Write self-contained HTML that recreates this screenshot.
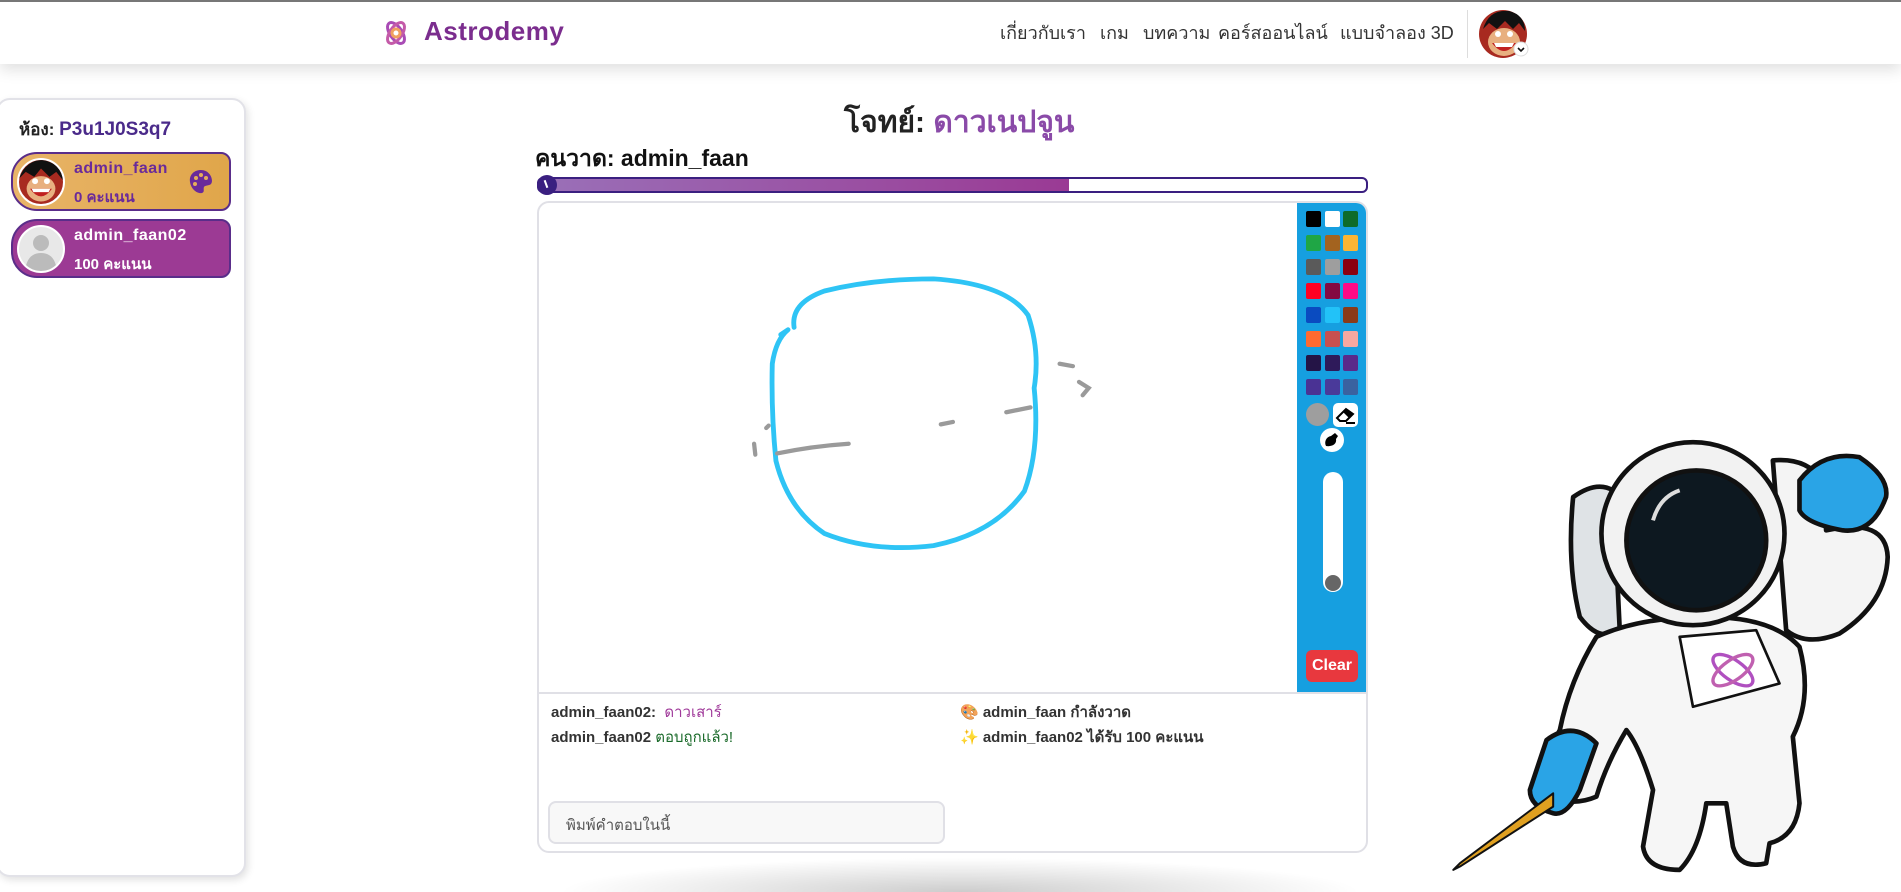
<!DOCTYPE html>
<html><head><meta charset="utf-8">
<style>
*{box-sizing:border-box;margin:0;padding:0}
html,body{width:1901px;height:892px;overflow:hidden}
body{background:#fff;font-family:"Liberation Sans","Noto Sans CJK SC",sans-serif;position:relative;color:#222}
.hdr{position:absolute;left:0;top:0;width:1901px;height:64px;background:#fff;border-top:2px solid #777;box-shadow:0 6px 14px rgba(0,0,0,.12);z-index:2}
.abs{position:absolute}
.nav{position:absolute;top:16px;font-size:18px;color:#333;white-space:nowrap}
.panel{position:absolute;left:-4px;top:98px;width:250px;height:779px;border:2px solid #e2e2e8;border-radius:14px;box-shadow:2px 3px 8px rgba(0,0,0,.12);background:#fff}
.card{position:absolute;left:13px;width:220px;height:59px;border:2px solid #5a2d8a;border-radius:26px 10px 10px 26px}
.av{position:absolute;left:4px;top:4px;width:48px;height:48px;border-radius:50%;border:2px solid #fff;overflow:hidden}
.nm{position:absolute;left:61px;top:6px;font-weight:bold;font-size:16px;letter-spacing:.5px}
.sc{position:absolute;left:61px;top:31px;font-weight:bold;font-size:15px}
.sw{position:absolute;width:15px;height:16px;border-radius:2px}
</style></head><body>
<div class="hdr">
 <svg class="abs" style="left:382px;top:16px" width="28" height="30" viewBox="0 0 28 30">
  <g fill="none" stroke-width="3"><ellipse cx="14" cy="15" rx="12" ry="6" stroke="#a94bb5" transform="rotate(55 14 15)"/><ellipse cx="14" cy="15" rx="12" ry="6" stroke="#c45aa8" transform="rotate(-55 14 15)"/><circle cx="14" cy="15" r="4" stroke="#f0a060"/></g></svg>
 <div class="abs" style="left:424px;top:14px;font-size:26px;font-weight:bold;color:#7b2d8e;letter-spacing:.5px">Astrodemy</div>
 <div class="nav" style="left:1000px">เกี่ยวกับเรา</div>
 <div class="nav" style="left:1100px">เกม</div>
 <div class="nav" style="left:1143px">บทความ</div>
 <div class="nav" style="left:1218px">คอร์สออนไลน์</div>
 <div class="nav" style="left:1340px">แบบจำลอง 3D</div>
 <div class="abs" style="left:1467px;top:8px;width:1px;height:48px;background:#ddd"></div>
 <svg class="abs" style="left:1479px;top:7px" width="52" height="52" viewBox="0 0 52 52">
  <circle cx="24" cy="25" r="24" fill="#a82a20"/><path d="M4 20 Q10 0 30 2 Q46 6 46 22 L40 14 L34 20 L26 12 L18 20 L10 14Z" fill="#111"/>
  <ellipse cx="25" cy="33" rx="16" ry="14" fill="#e8b080"/><path d="M13 34 Q25 50 37 34Z" fill="#c02020"/><path d="M15 34 L35 34 L33 38 L17 38Z" fill="#fff"/>
  <circle cx="19" cy="25" r="3" fill="#fff"/><circle cx="31" cy="25" r="3" fill="#fff"/>
  <circle cx="42" cy="40" r="7" fill="#fff" stroke="#ddd"/><path d="M39 39 L42 42 L45 39" stroke="#111" stroke-width="1.6" fill="none"/></svg>
</div>

<div class="panel">
 <div class="abs" style="left:21px;top:16px;font-size:17px;font-weight:bold">ห้อง: <span style="color:#4a2a8a;font-size:19px">P3u1J0S3q7</span></div>
 <div class="card" style="top:52px;background:linear-gradient(90deg,#e8b468,#e0a64a)">
  <div class="av" style="background:#a82a20"><svg width="44" height="44" viewBox="0 0 52 52"><path d="M0 22 Q8 0 28 0 Q50 4 52 24 L44 14 L36 20 L26 10 L18 20 L8 14Z" fill="#111"/><ellipse cx="26" cy="34" rx="17" ry="15" fill="#e8b080"/><path d="M13 34 Q26 52 39 34Z" fill="#c02020"/><path d="M15 34 L37 34 L35 38 L17 38Z" fill="#fff"/><circle cx="19" cy="25" r="3.5" fill="#fff"/><circle cx="33" cy="25" r="3.5" fill="#fff"/></svg></div>
  <div class="nm" style="color:#6a2a9a">admin_faan</div>
  <div class="sc" style="color:#6a2a9a">0 คะแนน</div>
  <svg class="abs" style="left:176px;top:15px" width="24" height="26" viewBox="0 0 24 26"><path d="M12 1 C4 1 0 7 1 13 C2 20 8 25 13 24 C16 23 14 20 15 18 C16 16 20 17 22 15 C25 11 21 1 12 1Z" fill="#6a2a9a"/><circle cx="7" cy="9" r="2" fill="#e6ad5a"/><circle cx="12" cy="6" r="2" fill="#e6ad5a"/><circle cx="17" cy="9" r="2" fill="#e6ad5a"/><circle cx="6" cy="15" r="2" fill="#e6ad5a"/></svg>
 </div>
 <div class="card" style="top:119px;background:#9c3a94">
  <div class="av" style="background:#e8e8e8"><svg width="44" height="44" viewBox="0 0 44 44"><circle cx="22" cy="16" r="8" fill="#bbb"/><path d="M6 44 Q8 26 22 26 Q36 26 38 44Z" fill="#bbb"/></svg></div>
  <div class="nm" style="color:#fff">admin_faan02</div>
  <div class="sc" style="color:#fff">100 คะแนน</div>
 </div>
</div>

<div class="abs" style="left:560px;top:858px;width:800px;height:34px;background:radial-gradient(ellipse 50% 100% at 50% 100%,rgba(0,0,0,.2),rgba(0,0,0,.08) 60%,rgba(0,0,0,0) 100%)"></div>

<div class="abs" style="left:844px;top:99px;font-size:30px;font-weight:bold;color:#222">โจทย์: <span style="color:#8a4aa8">ดาวเนปจูน</span></div>
<div class="abs" style="left:535px;top:141px;font-size:23px;font-weight:bold;color:#111">คนวาด: admin_faan</div>
<div class="abs" style="left:537px;top:177px;width:831px;height:16px;border:2px solid #3a1f80;border-radius:6px;overflow:hidden;background:#fff">
 <div style="width:530px;height:100%;background:linear-gradient(90deg,#9a70b8,#9a3a94)"></div></div>
<div class="abs" style="left:537px;top:175px;width:20px;height:20px;border-radius:50%;background:#3a1f80"><div style="position:absolute;left:8px;top:5px;width:2px;height:8px;background:#fff;transform:rotate(-20deg)"></div></div>

<div class="abs" style="left:537px;top:201px;width:831px;height:652px;border:2px solid #e0e0e6;border-radius:12px;background:#fff;overflow:hidden">
 <div class="abs" style="left:758px;top:0;width:71px;height:489px;background:#169fe0;border-radius:0 10px 0 0"></div>
 <div class="abs" style="left:0;top:489px;width:831px;height:2px;background:#e0e0e6"></div>
 <div class="abs" style="left:12px;top:497px;font-size:15px;font-weight:bold;color:#333">admin_faan02:&nbsp; <span style="color:#a03a9a;font-weight:normal">ดาวเสาร์</span></div>
 <div class="abs" style="left:12px;top:522px;font-size:15px;font-weight:bold;color:#333">admin_faan02 <span style="color:#1a6a2a;font-weight:normal">ตอบถูกแล้ว!</span></div>
 <div class="abs" style="left:421px;top:497px;font-size:15px;font-weight:bold;color:#333">🎨 admin_faan กำลังวาด</div>
 <div class="abs" style="left:421px;top:522px;font-size:15px;font-weight:bold;color:#333">✨ admin_faan02 ได้รับ 100 คะแนน</div>
 <div class="abs" style="left:9px;top:598px;width:397px;height:43px;border:2px solid #e0e0e6;border-radius:8px;background:#f8f8f8;font-size:15px;color:#555;padding:10px 16px">พิมพ์คำตอบในนี้</div>
</div>

<div class="sw" style="left:1306px;top:211px;background:#000"></div><div class="sw" style="left:1325px;top:211px;background:#fff"></div><div class="sw" style="left:1343px;top:211px;background:#0e6b2a"></div>
<div class="sw" style="left:1306px;top:235px;background:#1fa645"></div><div class="sw" style="left:1325px;top:235px;background:#a3631f"></div><div class="sw" style="left:1343px;top:235px;background:#fbb534"></div>
<div class="sw" style="left:1306px;top:259px;background:#5a5a5a"></div><div class="sw" style="left:1325px;top:259px;background:#9e9e9e"></div><div class="sw" style="left:1343px;top:259px;background:#8a0010"></div>
<div class="sw" style="left:1306px;top:283px;background:#ff0022"></div><div class="sw" style="left:1325px;top:283px;background:#840842"></div><div class="sw" style="left:1343px;top:283px;background:#ff0a86"></div>
<div class="sw" style="left:1306px;top:307px;background:#0a4bc0"></div><div class="sw" style="left:1325px;top:307px;background:#22c2f8"></div><div class="sw" style="left:1343px;top:307px;background:#8a3a18"></div>
<div class="sw" style="left:1306px;top:331px;background:#ff6a30"></div><div class="sw" style="left:1325px;top:331px;background:#c85050"></div><div class="sw" style="left:1343px;top:331px;background:#f8a8a0"></div>
<div class="sw" style="left:1306px;top:355px;background:#241446"></div><div class="sw" style="left:1325px;top:355px;background:#2e1a5a"></div><div class="sw" style="left:1343px;top:355px;background:#5a2a8a"></div>
<div class="sw" style="left:1306px;top:379px;background:#4a3294"></div><div class="sw" style="left:1325px;top:379px;background:#4a3a9a"></div><div class="sw" style="left:1343px;top:379px;background:#3a62a0"></div>
<div class="abs" style="left:1306px;top:403px;width:23px;height:23px;border-radius:50%;background:#9e9e9e"></div>
<div class="abs" style="left:1333px;top:403px;width:25px;height:24px;border-radius:5px;background:#fff"><svg width="25" height="24" viewBox="0 0 25 24"><path d="M4 15 L13 6 L20 11 L13 18 L7 18Z" fill="none" stroke="#000" stroke-width="2"/><path d="M10 9 L13 6 L20 11 L16 15Z" fill="#000"/><path d="M13 20 H22" stroke="#000" stroke-width="2"/></svg></div>
<div class="abs" style="left:1320px;top:428px;width:24px;height:24px;border-radius:50%;background:#fff"><svg width="24" height="24" viewBox="0 0 24 24"><path d="M6 18 C4 14 6 9 11 8 L15 5 L18 8 L16 11 C17 16 12 19 6 18Z" fill="#000"/></svg></div>
<div class="abs" style="left:1323px;top:472px;width:20px;height:120px;border-radius:10px;background:#fff"></div>
<div class="abs" style="left:1325px;top:575px;width:16px;height:16px;border-radius:50%;background:#666"></div>
<div class="abs" style="left:1306px;top:650px;width:52px;height:32px;border-radius:6px;background:#e8383e;color:#fff;font-weight:bold;font-size:16px;text-align:center;line-height:32px">Clear</div>

<svg class="abs" style="left:0;top:0" width="1901" height="892" viewBox="0 0 1568 735.7">
 <path d="M655 270 Q652 250 680 240 Q720 230 770 230 Q830 234 848 260 Q858 290 853 320 Q858 370 845 405 Q820 440 770 450 Q720 456 680 440 Q650 420 640 380 Q636 340 637 300 Q640 280 650 272 L644 276" fill="none" stroke="#2ec4f5" stroke-width="4" stroke-linecap="round" stroke-linejoin="round"/>
 <g fill="none" stroke="#9a9a9a" stroke-width="3.5" stroke-linecap="round">
  <path d="M623 375 L622 366"/><path d="M632 353 L634 351"/><path d="M641 374 Q670 368 700 366"/><path d="M776 350 L786 348"/><path d="M830 340 L850 336"/><path d="M874 300 L885 302"/><path d="M890 315 L898 320 L893 326"/>
 </g>
</svg>

<svg class="abs" style="left:1440px;top:430px" width="461" height="462" viewBox="0 0 1385 1385">
 <g stroke="#111" stroke-width="14" stroke-linejoin="round">
  <path d="M400 200 Q470 150 520 180 L540 600 Q480 640 420 560 Q380 400 400 200Z" fill="#dfe3e6"/>
  <path d="M1000 90 Q1100 80 1150 150 L1160 300 Q1340 260 1345 380 Q1340 520 1200 610 Q1100 650 1040 600 Z" fill="#f4f4f4"/>
  <path d="M470 620 Q600 560 800 560 Q1000 560 1080 650 Q1120 800 1060 920 L1080 1120 Q1070 1220 990 1240 L980 1300 Q900 1320 880 1250 L860 1120 L800 1120 Q780 1260 720 1320 Q620 1320 610 1250 L640 1080 Q600 950 560 900 Q500 1000 470 1100 Q400 1130 330 1100 Q300 1000 360 900 Q390 750 470 620Z" fill="#f6f6f6"/>
  <circle cx="760" cy="310" r="275" fill="#f2f2f2"/>
  <circle cx="770" cy="330" r="210" fill="#0d1820"/>
  <path d="M720 620 L950 600 L1020 760 L760 830Z" fill="#fff" stroke-width="8"/>
  <path d="M1080 150 Q1150 60 1260 80 Q1350 140 1340 200 Q1300 310 1210 300 Q1100 280 1080 240Z" fill="#2aa4e6"/>
  <path d="M320 930 Q400 870 470 940 L420 1080 Q380 1160 340 1150 Q270 1130 270 1080Z" fill="#2aa4e6"/>
  <path d="M340 1090 L60 1300 L40 1320 L60 1310 L340 1130Z" fill="#e0a020" stroke-width="6"/>
 </g>
 <path d="M640 270 Q660 200 720 180" stroke="#ddd" stroke-width="12" fill="none"/>
 <g fill="none" stroke-width="10"><ellipse cx="880" cy="720" rx="70" ry="30" stroke="#b050c0" transform="rotate(35 880 720)"/><ellipse cx="880" cy="720" rx="70" ry="30" stroke="#c060b0" transform="rotate(-35 880 720)"/></g>
</svg>
</body></html>
